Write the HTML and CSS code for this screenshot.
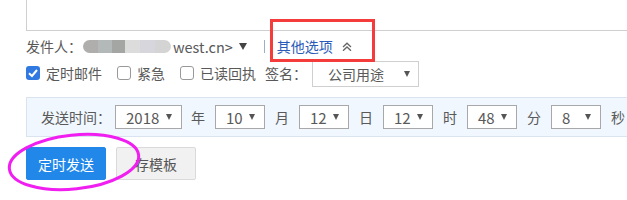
FILE: index.html
```html
<!DOCTYPE html>
<html lang="zh-CN">
<head>
<meta charset="utf-8">
<title>定时发送</title>
<link rel="stylesheet" href="styles.css">
</head>
<body>
<div class="page">
  <div class="editor"></div>

  <div class="sender-row">
    <span class="label">发件人：</span>
    <span class="blur"></span>
    <span class="addr">west.cn&gt;</span>
    <span class="caret"></span>
    <span class="sep"></span>
    <a class="more">其他选项</a>
    <svg class="chev" width="10" height="9" viewBox="0 0 10 9"><polyline points="1,5 5,1.2 9,5" fill="none" stroke="#666" stroke-width="1.3"/><polyline points="1,8.8 5,5 9,8.8" fill="none" stroke="#666" stroke-width="1.3"/></svg>
  </div>

  <div class="opt-row">
    <span class="cb checked"><svg width="14" height="14" viewBox="0 0 14 14"><polyline points="3,7.2 6,10 11,4" fill="none" stroke="#fff" stroke-width="2"/></svg></span>
    <span class="opt-text">定时邮件</span>
    <span class="cb"></span>
    <span class="opt-text">紧急</span>
    <span class="cb"></span>
    <span class="opt-text">已读回执</span>
    <span class="sign-label">签名：</span>
    <span class="select sign"><span class="val">公司用途</span><span class="arrow"></span></span>
  </div>

  <div class="time-panel">
    <span class="time-label">发送时间：</span>
    <span class="select year"><span class="val">2018</span><span class="arrow"></span></span>
    <span class="unit">年</span>
    <span class="select"><span class="val">10</span><span class="arrow"></span></span>
    <span class="unit">月</span>
    <span class="select"><span class="val">12</span><span class="arrow"></span></span>
    <span class="unit">日</span>
    <span class="select"><span class="val">12</span><span class="arrow"></span></span>
    <span class="unit">时</span>
    <span class="select"><span class="val">48</span><span class="arrow"></span></span>
    <span class="unit">分</span>
    <span class="select"><span class="val">8</span><span class="arrow"></span></span>
    <span class="unit">秒</span>
  </div>

  <div class="buttons">
    <button class="btn primary">定时发送</button>
    <button class="btn plain">存模板</button>
  </div>

  <div class="mark-rect"></div>
  <svg class="mark-ellipse" width="160" height="72" viewBox="0 0 160 72"><ellipse cx="74" cy="34" rx="65" ry="27" transform="rotate(-6 74 34)" fill="none" stroke="#f01ef0" stroke-width="3"/></svg>
</div>
</body>
</html>
```

FILE: styles.css
```css
html, body {
  margin: 0;
  padding: 0;
  background: #fff;
}
body {
  font-family: "Noto Sans CJK SC", "Microsoft YaHei", sans-serif;
  font-size: 14px;
  color: #595959;
  width: 627px;
  height: 200px;
  overflow: hidden;
}
.page {
  position: relative;
  padding-left: 26px;
}
.page span, .page svg, .page a {
  flex-shrink: 0;
  white-space: nowrap;
}
.editor {
  height: 31px;
  box-sizing: border-box;
  border-left: 1px solid #cfcfcf;
  border-bottom: 1px solid #cfcfcf;
}
.sender-row {
  display: flex;
  align-items: center;
  height: 30px;
}
.label { margin-right: 1px; }
.blur {
  width: 88px;
  height: 13px;
  border-radius: 7px;
  background: linear-gradient(to right,
    #b0aeac 0, #b0aeac 17%,
    #b3b8b9 17%, #b3b8b9 33%,
    #a4a6a4 33%, #a4a6a4 48%,
    #dcdcdc 48%, #dcdcdc 65%,
    #d6d6dc 65%, #d6d6dc 82%,
    #d4d4d4 82%);
}
.addr {
  margin-left: 2px;
  font-size: 14.5px;
}
.caret {
  width: 0;
  height: 0;
  margin-left: 6px;
  border-left: 4.5px solid transparent;
  border-right: 4.5px solid transparent;
  border-top: 7px solid #444;
}
.sep {
  width: 0;
  height: 13px;
  margin-left: 17px;
  border-left: 1.5px solid #9ab0c8;
}
.more {
  margin-left: 12px;
  color: #2a5bb9;
}
.chev { margin-left: 9px; }

.opt-row {
  display: flex;
  align-items: center;
  height: 26px;
}
.cb {
  width: 14px;
  height: 14px;
  box-sizing: border-box;
  border: 1px solid #999;
  border-radius: 3px;
  background: #fff;
  margin-left: 15px;
  margin-top: -3px;
  display: flex;
}
.cb:first-child { margin-left: 0; }
.cb.checked {
  border: none;
  background: #3079e0;
}
.opt-text {
  margin-left: 6px;
  margin-top: -3px;
}
.sign-label {
  margin-left: 9px;
  margin-top: -3px;
}
.select {
  display: flex;
  align-items: center;
  justify-content: space-between;
  box-sizing: border-box;
  width: 50px;
  height: 24px;
  border: 1px solid #a8a8a8;
  background: #fff;
  padding: 0 9px 0 10px;
  font-size: 15px;
}
.select .arrow {
  width: 0;
  height: 0;
  border-left: 3.5px solid transparent;
  border-right: 3.5px solid transparent;
  border-top: 6px solid #555;
}
.select.sign {
  width: 107px;
  height: 26px;
  margin-left: 5px;
  border-color: #cfcfcf;
  padding: 0 8px 0 15px;
  font-size: 14px;
}
.select.year { width: 67px; }

.time-panel {
  display: flex;
  align-items: center;
  box-sizing: border-box;
  height: 40px;
  margin-top: 10px;
  padding-left: 14px;
  background: #f0f7fe;
  border: 1px solid #d9e4ef;
  border-right: none;
}
.time-label { margin-right: 4px; }
.unit {
  width: 14px;
  margin: 0 10px;
}
.select.year + .unit { margin-left: 9px; }

.buttons {
  display: flex;
  gap: 10px;
  margin-top: 10px;
}
.btn {
  width: 80px;
  height: 33px;
  box-sizing: border-box;
  font-family: inherit;
  font-size: 14px;
  border-radius: 2px;
  padding: 0;
}
.btn.primary {
  background: #2188ea;
  border: 1px solid #2188ea;
  color: #fff;
}
.btn.plain {
  background: #f1f1f1;
  border: 1px solid #dadada;
  color: #555;
}

.mark-rect {
  position: absolute;
  left: 270px;
  top: 19px;
  width: 105px;
  height: 43px;
  box-sizing: border-box;
  border: 3px solid #f43c3c;
}
.mark-ellipse {
  position: absolute;
  left: 0;
  top: 128px;
}
```
